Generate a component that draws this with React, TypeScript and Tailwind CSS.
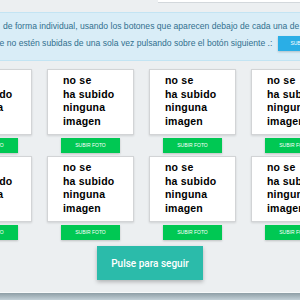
const rows = [0, 1];
const cols = [0, 1, 2, 3];

function PhotoCard() {
  return (
    <div className="flex flex-col items-center">
      <div className="w-[87px] h-[66px] bg-white border border-[#d2d4d6] shadow-[0_1px_2px_rgba(0,0,0,0.12)] pl-[15px] pt-[4px] text-black font-bold text-[10.5px] leading-[13.5px] tracking-[0.2px]">
        <div>no se</div>
        <div>ha subido</div>
        <div>ninguna</div>
        <div>imagen</div>
      </div>
      <button className="mt-[3px] w-[59px] h-[15px] bg-[#00c853] text-white text-[5px] leading-[15px] uppercase shadow-[0_1px_2px_rgba(0,0,0,0.2)]">
        Subir foto
      </button>
    </div>
  );
}

export default function App() {
  return (
    <div className="w-[300px] h-[300px] overflow-hidden bg-[#eceff1] flex flex-col font-['Liberation_Sans',Arial,sans-serif]">
      <div className="ml-[158px] h-[3px] shrink-0 bg-white border-b border-[#d3d8dc]" />

      <div className="mt-[9px] h-[49px] shrink-0 bg-[#d9edf7] border-y border-[#c3e4f3] text-[#31708f] text-[8.6px] whitespace-nowrap">
        <div className="pl-[3px] pt-[5px] leading-[17px]">
          de forma individual, usando los botones que aparecen debajo de cada una de ellas
        </div>
        <div className="flex items-center ml-[-10px] h-[17px]">
          <span>que no estén subidas de una sola vez pulsando sobre el botón siguiente .:</span>
          <span className="ml-[6px] h-[15px] px-[12px] bg-[#2aaee6] text-white text-[5px] leading-[15px] uppercase shadow-[0_1px_2px_rgba(0,0,0,0.2)]">
            Subir todas
          </span>
        </div>
      </div>

      <div className="flex-1 flex flex-col">
        {rows.map((r) => (
          <div key={r} className="flex gap-[15px] ml-[-55px] mt-[8px] first:mt-[8px] [&:not(:first-child)]:mt-[3px]">
            {cols.map((c) => (
              <PhotoCard key={c} />
            ))}
          </div>
        ))}

        <div className="flex justify-center mt-[6px]">
          <button className="w-[106px] h-[34px] bg-[#2bbbaa] text-white text-[10px] font-medium font-['Roboto',sans-serif] shadow-[0_2px_4px_rgba(0,0,0,0.25)]">
            Pulse para seguir
          </button>
        </div>
      </div>

      <div className="h-[8px] shrink-0 border-t border-[#f7f9fa] bg-gradient-to-b from-[#8e9ea6] to-[#c3d1d8]" />
    </div>
  );
}
